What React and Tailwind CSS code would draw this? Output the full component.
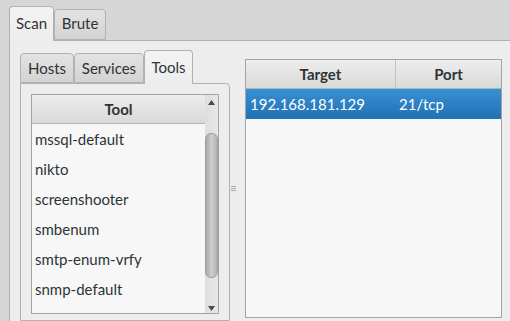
export default function App() {
  const tools = [
    "mssql-default",
    "nikto",
    "screenshooter",
    "smbenum",
    "smtp-enum-vrfy",
    "snmp-default",
  ];
  return (
    <div className="w-[510px] h-[321px] overflow-hidden bg-[#d6d6d6] flex flex-col text-[15px] leading-[18px] text-[#2e3436] font-[Lato,sans-serif]">
      {/* outer tabs */}
      <div className="h-[40px] shrink-0 flex items-end pl-[9px] pt-[6px]">
        <div className="relative z-10 w-[45px] h-[35px] -mb-px border border-b-0 border-[#b1b1b1] rounded-t-[4px] bg-gradient-to-b from-[#f3f3f3] to-[#ededed] flex justify-center pt-[7px]">
          Scan
        </div>
        <div className="w-[52px] h-[31px] border border-[#b1b1b1] rounded-t-[4px] bg-gradient-to-b from-[#e3e3e3] to-[#d3d3d3] flex justify-center pt-[4px]">
          Brute
        </div>
      </div>

      {/* outer panel */}
      <div className="flex-1 ml-[9px] border-l border-t border-[#b1b1b1] bg-[#ededed] flex pl-[10px] pt-[9px]">
        {/* inner notebook */}
        <div className="w-[210px] shrink-0 flex flex-col">
          <div className="h-[33px] shrink-0 flex items-end">
            <div className="w-[54px] h-[30px] border border-[#b1b1b1] rounded-t-[4px] bg-gradient-to-b from-[#e3e3e3] to-[#d3d3d3] flex justify-center pt-[5px]">
              Hosts
            </div>
            <div className="w-[70px] h-[30px] border border-[#b1b1b1] rounded-t-[4px] bg-gradient-to-b from-[#e3e3e3] to-[#d3d3d3] flex justify-center pt-[5px]">
              Services
            </div>
            <div className="relative z-10 w-[49px] h-[34px] -mb-px border border-b-0 border-[#b1b1b1] rounded-t-[4px] bg-gradient-to-b from-[#f3f3f3] to-[#ededed] flex justify-center pt-[7px]">
              Tools
            </div>
          </div>
          <div className="flex-1 border border-[#b1b1b1] rounded-tr-[4px] bg-[#ededed] pl-[10px] pt-[10px]">
            {/* tree view */}
            <div className="w-[188px] h-[220px] border border-[#a3a3a3] bg-[#f7f7f7] flex">
              <div className="flex-1 flex flex-col">
                <div className="h-[29px] shrink-0 border-b border-[#b4b4b4] bg-gradient-to-b from-[#ededed] to-[#d9d9d9] flex justify-center pt-[5px] font-bold">
                  Tool
                </div>
                {tools.map((t) => (
                  <div key={t} className="h-[30px] shrink-0 pl-[3px] leading-[30px]">
                    {t}
                  </div>
                ))}
              </div>
              {/* scrollbar */}
              <div className="w-[13px] shrink-0 bg-gradient-to-r from-[#dedede] to-[#e8e8e8] flex flex-col">
                <div className="h-[38px] shrink-0 flex justify-center pt-[5px]">
                  <svg width="7" height="5" viewBox="0 0 7 5">
                    <polygon points="3.5,0 7,5 0,5" fill="#4a4a4a" />
                  </svg>
                </div>
                <div className="h-[145px] shrink-0 rounded-[6px] border border-[#9e9e9e] bg-gradient-to-r from-[#a9a9a9] via-[#cdcdcd] to-[#b3b3b3]" />
                <div className="flex-1 flex flex-col justify-end items-center pb-[2px]">
                  <svg width="7" height="5" viewBox="0 0 7 5">
                    <polygon points="0,0 7,0 3.5,5" fill="#4a4a4a" />
                  </svg>
                </div>
              </div>
            </div>
          </div>
        </div>

        {/* paned handle */}
        <div className="w-[15px] shrink-0 pt-[136px] pl-[1px] flex flex-col gap-[1px]">
          <div className="w-[5px] h-px bg-[#a8a8a8]" />
          <div className="w-[5px] h-px bg-[#a8a8a8]" />
          <div className="w-[5px] h-px bg-[#a8a8a8]" />
        </div>

        {/* table */}
        <div className="w-[257px] h-[259px] shrink-0 mt-[9px] border border-[#a3a3a3] bg-[#f7f7f7] flex flex-col">
          <div className="h-[29px] shrink-0 border-b border-[#b4b4b4] bg-gradient-to-b from-[#ededed] to-[#d9d9d9] flex font-bold">
            <div className="w-[150px] border-r border-[#c2c2c2] flex justify-center pt-[5px]">Target</div>
            <div className="flex-1 flex justify-center pt-[5px]">Port</div>
          </div>
          <div className="h-[30px] shrink-0 bg-gradient-to-b from-[#3790d4] to-[#2171b3] text-white flex leading-[30px]">
            <div className="w-[149px] pl-[4px]">192.168.181.129</div>
            <div className="flex-1 pl-[4px]">21/tcp</div>
          </div>
        </div>
      </div>
    </div>
  );
}
